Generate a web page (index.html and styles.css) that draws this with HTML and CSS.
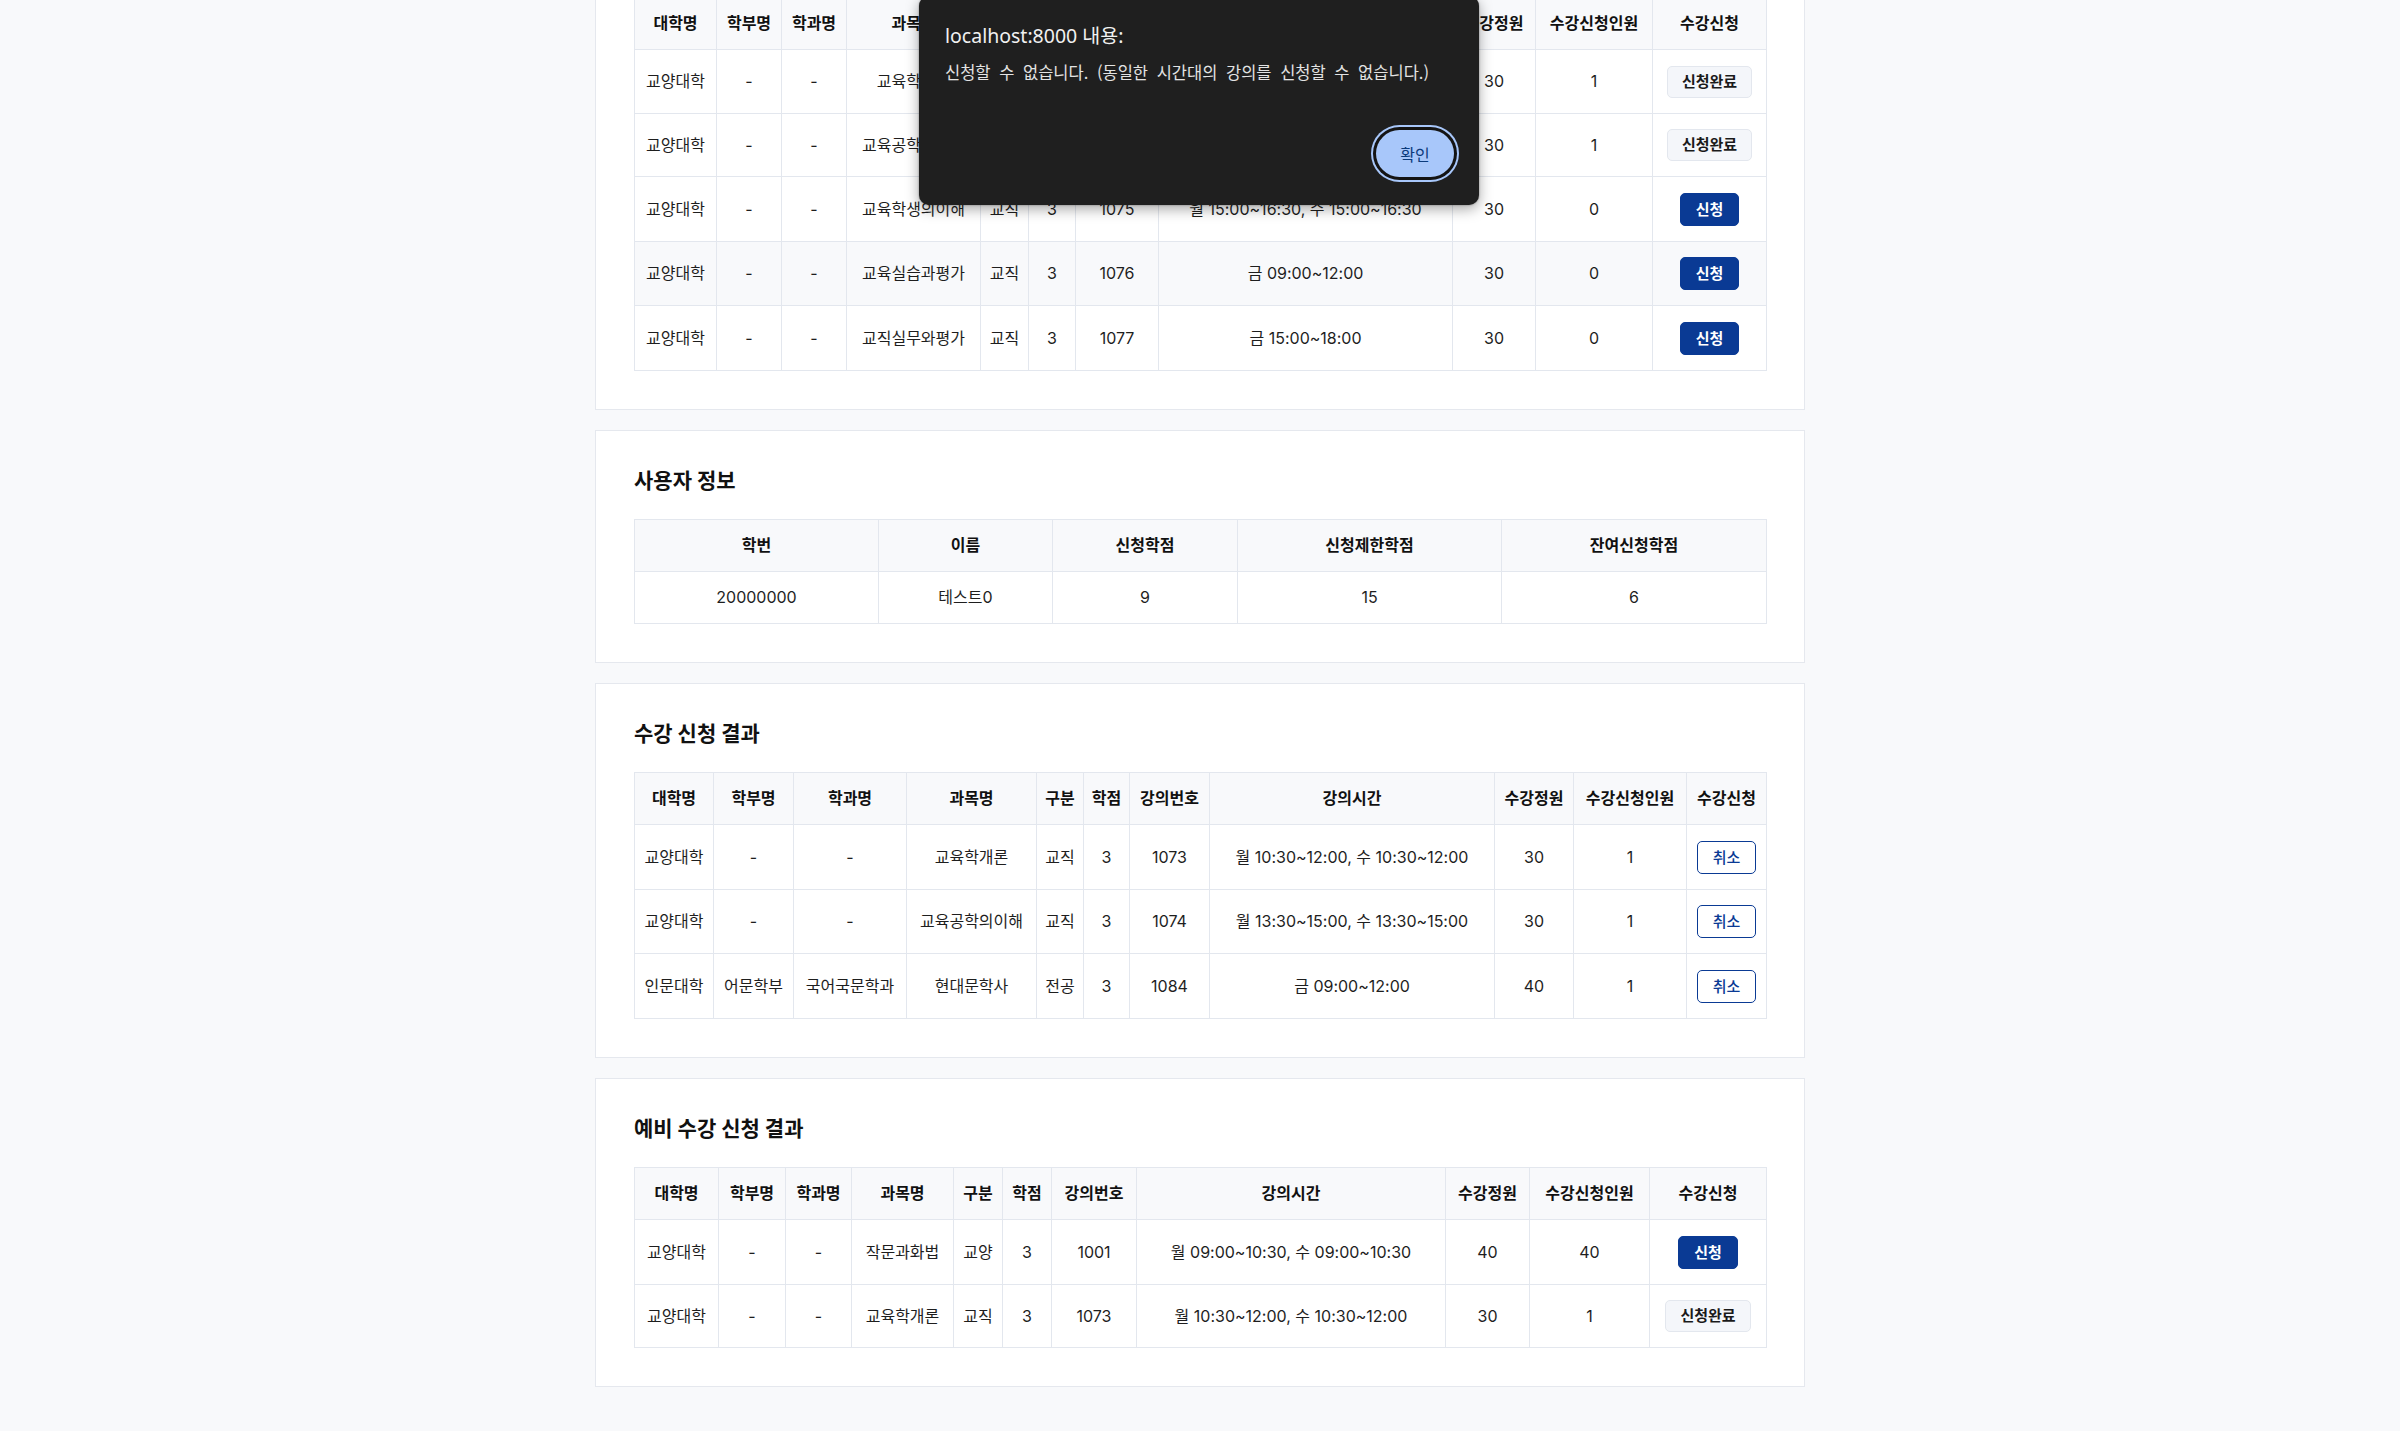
FILE: index.html
```html
<!DOCTYPE html>
<html lang="ko">
<head>
<meta charset="utf-8">
<title>수강 신청</title>
<link rel="stylesheet" href="styles.css">
</head>
<body>
<main class="page">
  <section class="card">
    <h2 class="card-title">강의 목록</h2>
    <table class="tbl tbl-lectures">
      <colgroup><col><col><col><col><col><col><col><col><col><col><col></colgroup>
      <thead>
        <tr><th>대학명</th><th>학부명</th><th>학과명</th><th>과목명</th><th>구분</th><th>학점</th><th>강의번호</th><th>강의시간</th><th>수강정원</th><th>수강신청인원</th><th>수강신청</th></tr>
      </thead>
      <tbody>
        <tr><td>교양대학</td><td>-</td><td>-</td><td>교육학개론</td><td>교직</td><td>3</td><td>1073</td><td>월 10:30~12:00, 수 10:30~12:00</td><td>30</td><td>1</td><td class="action"><button class="btn btn-done">신청완료</button></td></tr>
        <tr><td>교양대학</td><td>-</td><td>-</td><td>교육공학의이해</td><td>교직</td><td>3</td><td>1074</td><td>월 13:30~15:00, 수 13:30~15:00</td><td>30</td><td>1</td><td class="action"><button class="btn btn-done">신청완료</button></td></tr>
        <tr><td>교양대학</td><td>-</td><td>-</td><td>교육학생의이해</td><td>교직</td><td>3</td><td>1075</td><td>월 15:00~16:30, 수 15:00~16:30</td><td>30</td><td>0</td><td class="action"><button class="btn btn-apply">신청</button></td></tr>
        <tr class="is-hover"><td>교양대학</td><td>-</td><td>-</td><td>교육실습과평가</td><td>교직</td><td>3</td><td>1076</td><td>금 09:00~12:00</td><td>30</td><td>0</td><td class="action"><button class="btn btn-apply">신청</button></td></tr>
        <tr><td>교양대학</td><td>-</td><td>-</td><td>교직실무와평가</td><td>교직</td><td>3</td><td>1077</td><td>금 15:00~18:00</td><td>30</td><td>0</td><td class="action"><button class="btn btn-apply">신청</button></td></tr>
      </tbody>
    </table>
  </section>

  <section class="card">
    <h2 class="card-title">사용자 정보</h2>
    <table class="tbl tbl-user">
      <colgroup><col><col><col><col><col></colgroup>
      <thead>
        <tr><th>학번</th><th>이름</th><th>신청학점</th><th>신청제한학점</th><th>잔여신청학점</th></tr>
      </thead>
      <tbody>
        <tr><td>20000000</td><td>테스트0</td><td>9</td><td>15</td><td>6</td></tr>
      </tbody>
    </table>
  </section>

  <section class="card">
    <h2 class="card-title">수강 신청 결과</h2>
    <table class="tbl tbl-result">
      <colgroup><col><col><col><col><col><col><col><col><col><col><col></colgroup>
      <thead>
        <tr><th>대학명</th><th>학부명</th><th>학과명</th><th>과목명</th><th>구분</th><th>학점</th><th>강의번호</th><th>강의시간</th><th>수강정원</th><th>수강신청인원</th><th>수강신청</th></tr>
      </thead>
      <tbody>
        <tr><td>교양대학</td><td>-</td><td>-</td><td>교육학개론</td><td>교직</td><td>3</td><td>1073</td><td>월 10:30~12:00, 수 10:30~12:00</td><td>30</td><td>1</td><td class="action"><button class="btn btn-cancel">취소</button></td></tr>
        <tr><td>교양대학</td><td>-</td><td>-</td><td>교육공학의이해</td><td>교직</td><td>3</td><td>1074</td><td>월 13:30~15:00, 수 13:30~15:00</td><td>30</td><td>1</td><td class="action"><button class="btn btn-cancel">취소</button></td></tr>
        <tr><td>인문대학</td><td>어문학부</td><td>국어국문학과</td><td>현대문학사</td><td>전공</td><td>3</td><td>1084</td><td>금 09:00~12:00</td><td>40</td><td>1</td><td class="action"><button class="btn btn-cancel">취소</button></td></tr>
      </tbody>
    </table>
  </section>

  <section class="card">
    <h2 class="card-title">예비 수강 신청 결과</h2>
    <table class="tbl tbl-pre">
      <colgroup><col><col><col><col><col><col><col><col><col><col><col></colgroup>
      <thead>
        <tr><th>대학명</th><th>학부명</th><th>학과명</th><th>과목명</th><th>구분</th><th>학점</th><th>강의번호</th><th>강의시간</th><th>수강정원</th><th>수강신청인원</th><th>수강신청</th></tr>
      </thead>
      <tbody>
        <tr><td>교양대학</td><td>-</td><td>-</td><td>작문과화법</td><td>교양</td><td>3</td><td>1001</td><td>월 09:00~10:30, 수 09:00~10:30</td><td>40</td><td>40</td><td class="action"><button class="btn btn-apply">신청</button></td></tr>
        <tr><td>교양대학</td><td>-</td><td>-</td><td>교육학개론</td><td>교직</td><td>3</td><td>1073</td><td>월 10:30~12:00, 수 10:30~12:00</td><td>30</td><td>1</td><td class="action"><button class="btn btn-done">신청완료</button></td></tr>
      </tbody>
    </table>
  </section>
</main>

<div class="alert" role="alertdialog">
  <p class="alert-title">localhost:8000 내용:</p>
  <p class="alert-msg">신청할 수 없습니다. (동일한 시간대의 강의를 신청할 수 없습니다.)</p>
  <div class="alert-actions">
    <button class="alert-ok">확인</button>
  </div>
</div>
</body>
</html>
```

FILE: styles.css
```css
* { box-sizing: border-box; }

html, body {
  margin: 0;
  padding: 0;
}

body {
  background: #f8f9fb;
  font-family: "Inter", "Noto Sans CJK KR", sans-serif;
  color: #1b1b1b;
  overflow: hidden;
}

.page {
  width: 1210px;
  margin: -92px auto 0;
  display: flex;
  flex-direction: column;
  gap: 20px;
  padding-bottom: 20px;
}

.card {
  background: #ffffff;
  border: 1px solid #e5e8ee;
  padding: 38px;
}

.card-title {
  margin: 0 0 26px;
  font-size: 21px;
  line-height: 24px;
  font-weight: 700;
  color: #111111;
}

.tbl {
  width: 100%;
  border-collapse: collapse;
  table-layout: fixed;
  font-size: 16px;
}

.tbl th,
.tbl td {
  border: 1px solid #e3e7ee;
  padding: 15px 0;
  line-height: 21px;
  text-align: center;
  white-space: nowrap;
  overflow: hidden;
}

.tbl td.action {
  padding-top: 16px;
}

.tbl tbody tr:nth-child(even) td.action {
  padding-top: 15px;
}

.tbl th {
  background: #f8f9fb;
  font-weight: 700;
  color: #111111;
}

.tbl td {
  color: #1e1e1e;
}

.tbl tr.is-hover td {
  background: #f8f9fb;
}

/* column widths */
.tbl-lectures col:nth-child(1) { width: 82px; }
.tbl-lectures col:nth-child(2) { width: 65px; }
.tbl-lectures col:nth-child(3) { width: 65px; }
.tbl-lectures col:nth-child(4) { width: 134px; }
.tbl-lectures col:nth-child(5) { width: 48px; }
.tbl-lectures col:nth-child(6) { width: 47px; }
.tbl-lectures col:nth-child(7) { width: 83px; }
.tbl-lectures col:nth-child(8) { width: 294px; }
.tbl-lectures col:nth-child(9) { width: 83px; }
.tbl-lectures col:nth-child(10) { width: 117px; }
.tbl-lectures col:nth-child(11) { width: 114px; }

.tbl-user col:nth-child(1) { width: 244px; }
.tbl-user col:nth-child(2) { width: 174px; }
.tbl-user col:nth-child(3) { width: 185px; }
.tbl-user col:nth-child(4) { width: 264px; }
.tbl-user col:nth-child(5) { width: 265px; }

.tbl-result col:nth-child(1) { width: 79px; }
.tbl-result col:nth-child(2) { width: 80px; }
.tbl-result col:nth-child(3) { width: 113px; }
.tbl-result col:nth-child(4) { width: 130px; }
.tbl-result col:nth-child(5) { width: 47px; }
.tbl-result col:nth-child(6) { width: 46px; }
.tbl-result col:nth-child(7) { width: 80px; }
.tbl-result col:nth-child(8) { width: 285px; }
.tbl-result col:nth-child(9) { width: 79px; }
.tbl-result col:nth-child(10) { width: 113px; }
.tbl-result col:nth-child(11) { width: 80px; }

.tbl-pre col:nth-child(1) { width: 84px; }
.tbl-pre col:nth-child(2) { width: 67px; }
.tbl-pre col:nth-child(3) { width: 66px; }
.tbl-pre col:nth-child(4) { width: 102px; }
.tbl-pre col:nth-child(5) { width: 49px; }
.tbl-pre col:nth-child(6) { width: 49px; }
.tbl-pre col:nth-child(7) { width: 85px; }
.tbl-pre col:nth-child(8) { width: 309px; }
.tbl-pre col:nth-child(9) { width: 84px; }
.tbl-pre col:nth-child(10) { width: 120px; }
.tbl-pre col:nth-child(11) { width: 117px; }

/* buttons */
.btn {
  display: inline-block;
  vertical-align: middle;
  height: 33px;
  padding: 0 15px;
  border: 1px solid transparent;
  border-radius: 5px;
  font-family: "Inter", "Noto Sans CJK KR", sans-serif;
  font-size: 15px;
  line-height: 31px;
  font-weight: 700;
  cursor: pointer;
}

.btn-apply {
  background: #0a3a94;
  border-color: #0a3a94;
  color: #ffffff;
}

.btn-done {
  height: 32px;
  line-height: 30px;
  padding: 0 14px;
  background: #f4f6fa;
  border-color: #e3e7ee;
  color: #1a1a1a;
}

.btn-cancel {
  background: #ffffff;
  border-color: #0a3a94;
  color: #0a3a94;
  font-weight: 500;
}

/* browser alert overlay */
.alert {
  position: absolute;
  top: -4px;
  left: calc(50% - 281px);
  width: 560px;
  padding: 28px 25px 28px 26px;
  background: #1f1f1f;
  border-radius: 10px;
  box-shadow: 0 4px 14px rgba(0, 0, 0, 0.35), 0 0 2px rgba(0, 0, 0, 0.4);
  font-family: "Noto Sans", "Noto Sans CJK KR", sans-serif;
}

.alert-title {
  margin: 0;
  font-size: 19.5px;
  line-height: 24px;
  color: #f1f1f1;
}

.alert-msg {
  margin: 12px 0 0;
  font-family: "Noto Sans CJK KR", sans-serif;
  font-size: 16.5px;
  line-height: 24px;
  word-spacing: 4px;
  color: #e3e3e3;
}

.alert-actions {
  display: flex;
  justify-content: flex-end;
  margin-top: 46px;
}

.alert-ok {
  width: 78px;
  height: 47px;
  border: none;
  border-radius: 999px;
  background: #a8c7fa;
  color: #0b3a7a;
  font-family: "Noto Sans CJK KR", sans-serif;
  font-size: 16px;
  box-shadow: 0 0 0 3px #141414, 0 0 0 5px #a8c7fa;
  cursor: pointer;
}
```
